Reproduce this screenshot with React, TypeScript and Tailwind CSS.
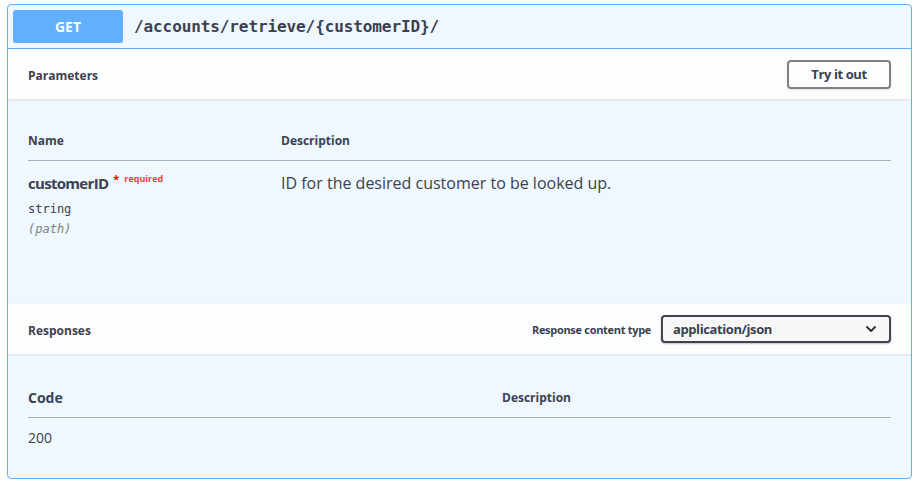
export default function App() {
  return (
    <div className="min-h-screen bg-white pt-[4px] pl-[7px] text-[#3b4151] font-['Open_Sans',sans-serif]">
      {/* Operation block */}
      <div className="w-[905px] h-[475px] border border-[#61affe] rounded-[4px] bg-[#eff7ff] overflow-hidden">
        {/* Summary */}
        <div className="flex items-center p-[5px] border-b border-[#61affe]">
          <div className="w-[110px] h-[33px] rounded-[3px] bg-[#61affe] flex items-center justify-center text-white text-[14px] font-bold">
            GET
          </div>
          <span className="ml-[11px] font-['DejaVu_Sans_Mono',monospace] text-[16px] font-semibold tracking-[-0.1px]">
            /accounts/retrieve/{"{customerID}"}/
          </span>
        </div>

        {/* Parameters header */}
        <div className="h-[50px] px-[20px] flex items-center justify-between bg-white/80 shadow-[0_1px_2px_rgba(0,0,0,0.1)] relative">
          <h4 className="pt-[3px] text-[12px] font-bold">Parameters</h4>
          <button className="w-[104px] h-[29px] pt-[1px] border-2 border-[#808080] rounded-[4px] text-[13px] font-bold tracking-[-0.4px] shadow-[0_1px_2px_rgba(0,0,0,0.1)]">
            Try it out
          </button>
        </div>

        {/* Parameters table */}
        <div className="h-[205px] px-[20px] pt-[21px]">
          <div className="h-[41px] pt-[2px] flex items-center border-b border-[#a8afbb] text-[12px] font-bold">
            <div className="w-[253px]">Name</div>
            <div>Description</div>
          </div>
          <div className="flex pt-[11px]">
            <div className="w-[253px]">
              <div className="flex items-start h-[22px]">
                <span className="text-[15px] font-bold leading-[22px] tracking-[-0.7px]">customerID</span>
                <span className="ml-[5px] text-[#ff0000] text-[11px] font-bold leading-[14px]">*</span>
                <span className="ml-[5px] text-[#f93e3e] text-[9px] font-bold leading-[14px]">required</span>
              </div>
              <div className="mt-[7px] font-['DejaVu_Sans_Mono',monospace] text-[12px] leading-[16px]">string</div>
              <div className="mt-[4px] font-['DejaVu_Sans_Mono',monospace] text-[12px] leading-[16px] italic text-[#808080]">(path)</div>
            </div>
            <div className="text-[16px] leading-[22px]">ID for the desired customer to be looked up.</div>
          </div>
        </div>

        {/* Responses header */}
        <div className="h-[50px] px-[20px] flex items-center justify-between bg-white/80 shadow-[0_1px_2px_rgba(0,0,0,0.1)] relative">
          <h4 className="pt-[4px] text-[12px] font-bold">Responses</h4>
          <div className="flex items-center">
            <span className="pt-[2px] text-[11px] font-bold tracking-[-0.3px]">Response content type</span>
            <div className="ml-[10px] w-[230px] h-[28px] border-2 border-[#41444e] rounded-[4px] bg-[#f7f7f7] shadow-[0_1px_2px_rgba(0,0,0,0.25)] flex items-center justify-between pl-[10px] pr-[13px]">
              <span className="pt-[1px] text-[13px] font-bold tracking-[-0.4px]">application/json</span>
              <svg width="10" height="6" viewBox="0 0 10 6" fill="none">
                <path d="M1 1l4 4 4-4" stroke="#303030" strokeWidth="1.8" strokeLinecap="round" strokeLinejoin="round" />
              </svg>
            </div>
          </div>
        </div>

        {/* Responses table */}
        <div className="px-[20px] pt-[23px]">
          <div className="h-[41px] pt-[1px] flex items-center border-b border-[#a8afbb] font-bold">
            <div className="w-[474px] text-[14px]">Code</div>
            <div className="text-[12px]">Description</div>
          </div>
          <div className="pt-[10px] text-[14px] leading-[20px]">200</div>
        </div>
      </div>
    </div>
  );
}
